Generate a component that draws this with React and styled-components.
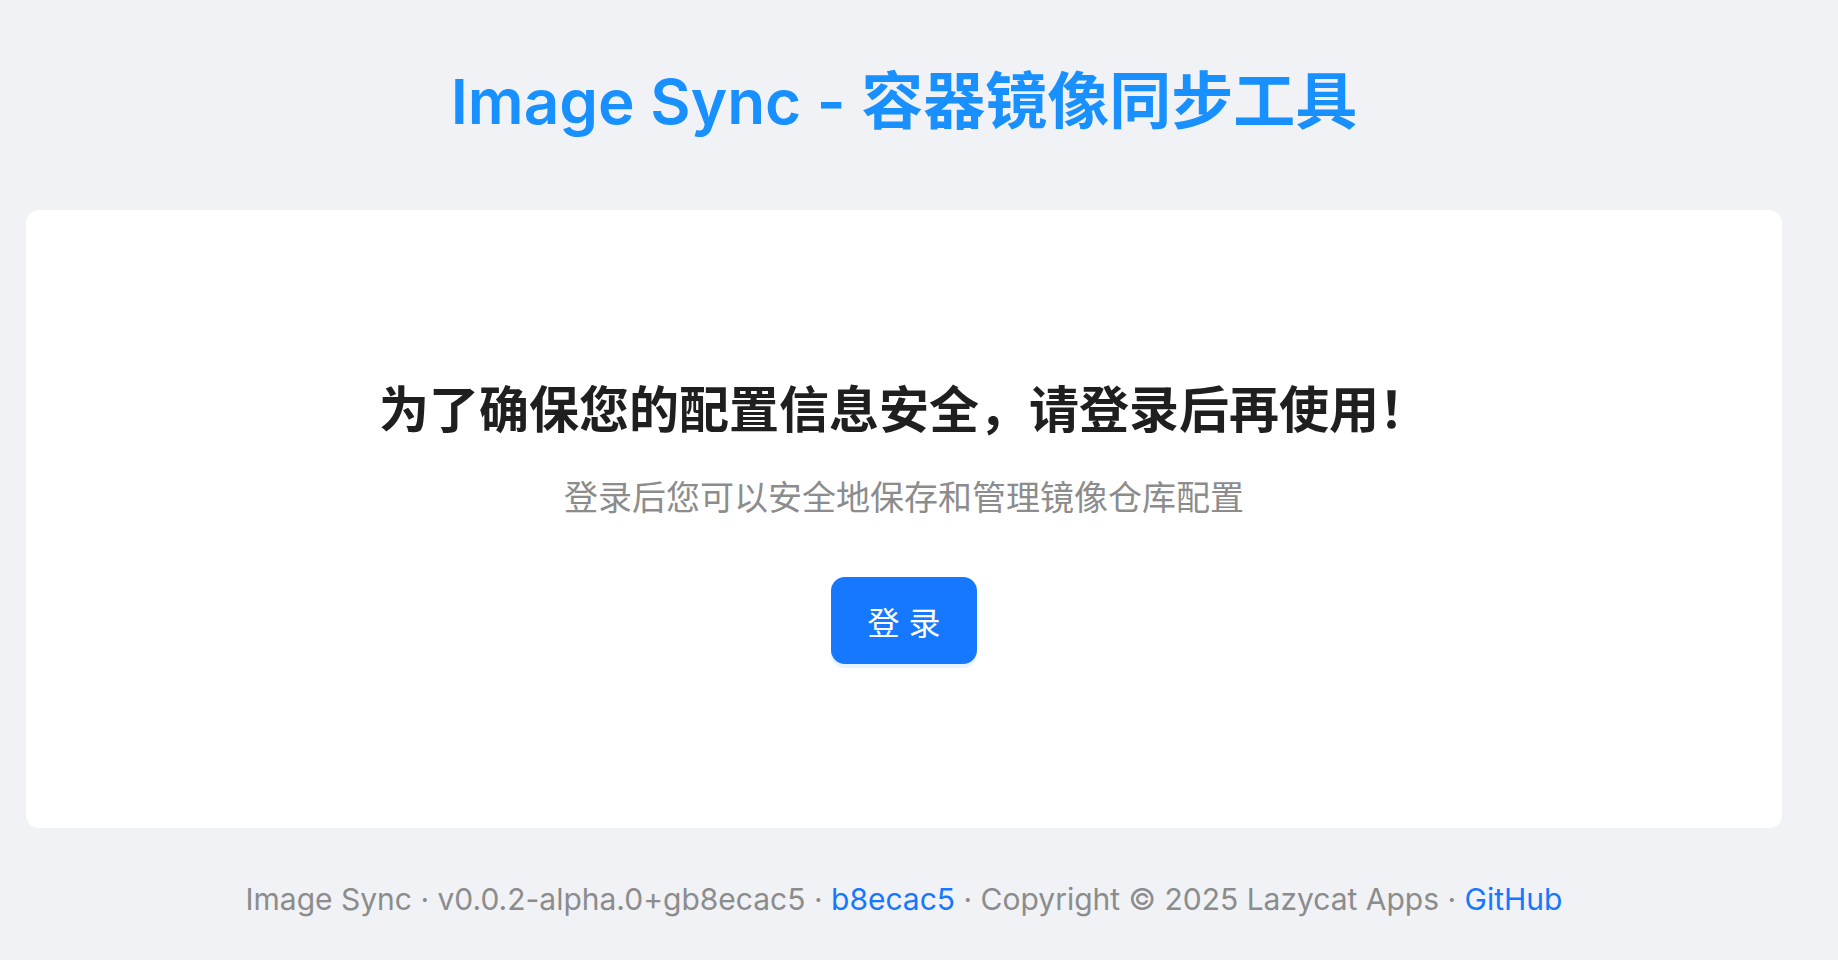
import React from 'react';
import styled, { createGlobalStyle } from 'styled-components';

const GlobalStyle = createGlobalStyle`
  html, body {
    margin: 0;
    padding: 0;
    background: #f0f2f5;
  }
  body {
    font-family: Inter, "Noto Sans CJK SC", "Noto Sans", sans-serif;
    -webkit-font-smoothing: antialiased;
  }
  * {
    box-sizing: border-box;
  }
`;

const Page = styled.div`
  width: calc(100% - 30px);
  min-height: 960px;
  padding: 64px 26px 0;
  display: flex;
  flex-direction: column;
  align-items: stretch;
`;

const Header = styled.h1`
  margin: 0 0 70px;
  text-align: center;
  font-size: 62px;
  line-height: 76px;
  font-weight: 600;
  color: #1890ff;
`;

const Card = styled.main`
  background: #fff;
  border-radius: 13px;
  height: 618px;
  display: flex;
  flex-direction: column;
  align-items: center;
  padding-top: 166px;
`;

const Notice = styled.h2`
  margin: 0;
  font-size: 50px;
  line-height: 68px;
  font-weight: 700;
  color: #1f1f1f;
`;

const Hint = styled.p`
  margin: 28px 0 54px;
  font-size: 34px;
  line-height: 51px;
  color: #8c8c8c;
`;

const LoginButton = styled.button`
  width: 146px;
  height: 87px;
  border: none;
  border-radius: 14px;
  background: #1677ff;
  color: #fff;
  font-family: inherit;
  font-size: 32px;
  box-shadow: 0 4px 0 rgba(5, 145, 255, 0.1);
  cursor: pointer;
`;

const Footer = styled.footer`
  margin-top: 50px;
  text-align: center;
  font-size: 30px;
  line-height: 42px;
  color: #8c8c8c;
`;

const Link = styled.a`
  color: #1677ff;
  text-decoration: none;
`;

export default function App() {
  return (
    <>
      <GlobalStyle />
      <Page>
        <Header>Image Sync - 容器镜像同步工具</Header>
        <Card>
          <Notice>为了确保您的配置信息安全，请登录后再使用！</Notice>
          <Hint>登录后您可以安全地保存和管理镜像仓库配置</Hint>
          <LoginButton>登 录</LoginButton>
        </Card>
        <Footer>
          Image Sync · v0.0.2-alpha.0+gb8ecac5 · <Link href="#">b8ecac5</Link> · Copyright © 2025 Lazycat Apps ·{' '}
          <Link href="#">GitHub</Link>
        </Footer>
      </Page>
    </>
  );
}
